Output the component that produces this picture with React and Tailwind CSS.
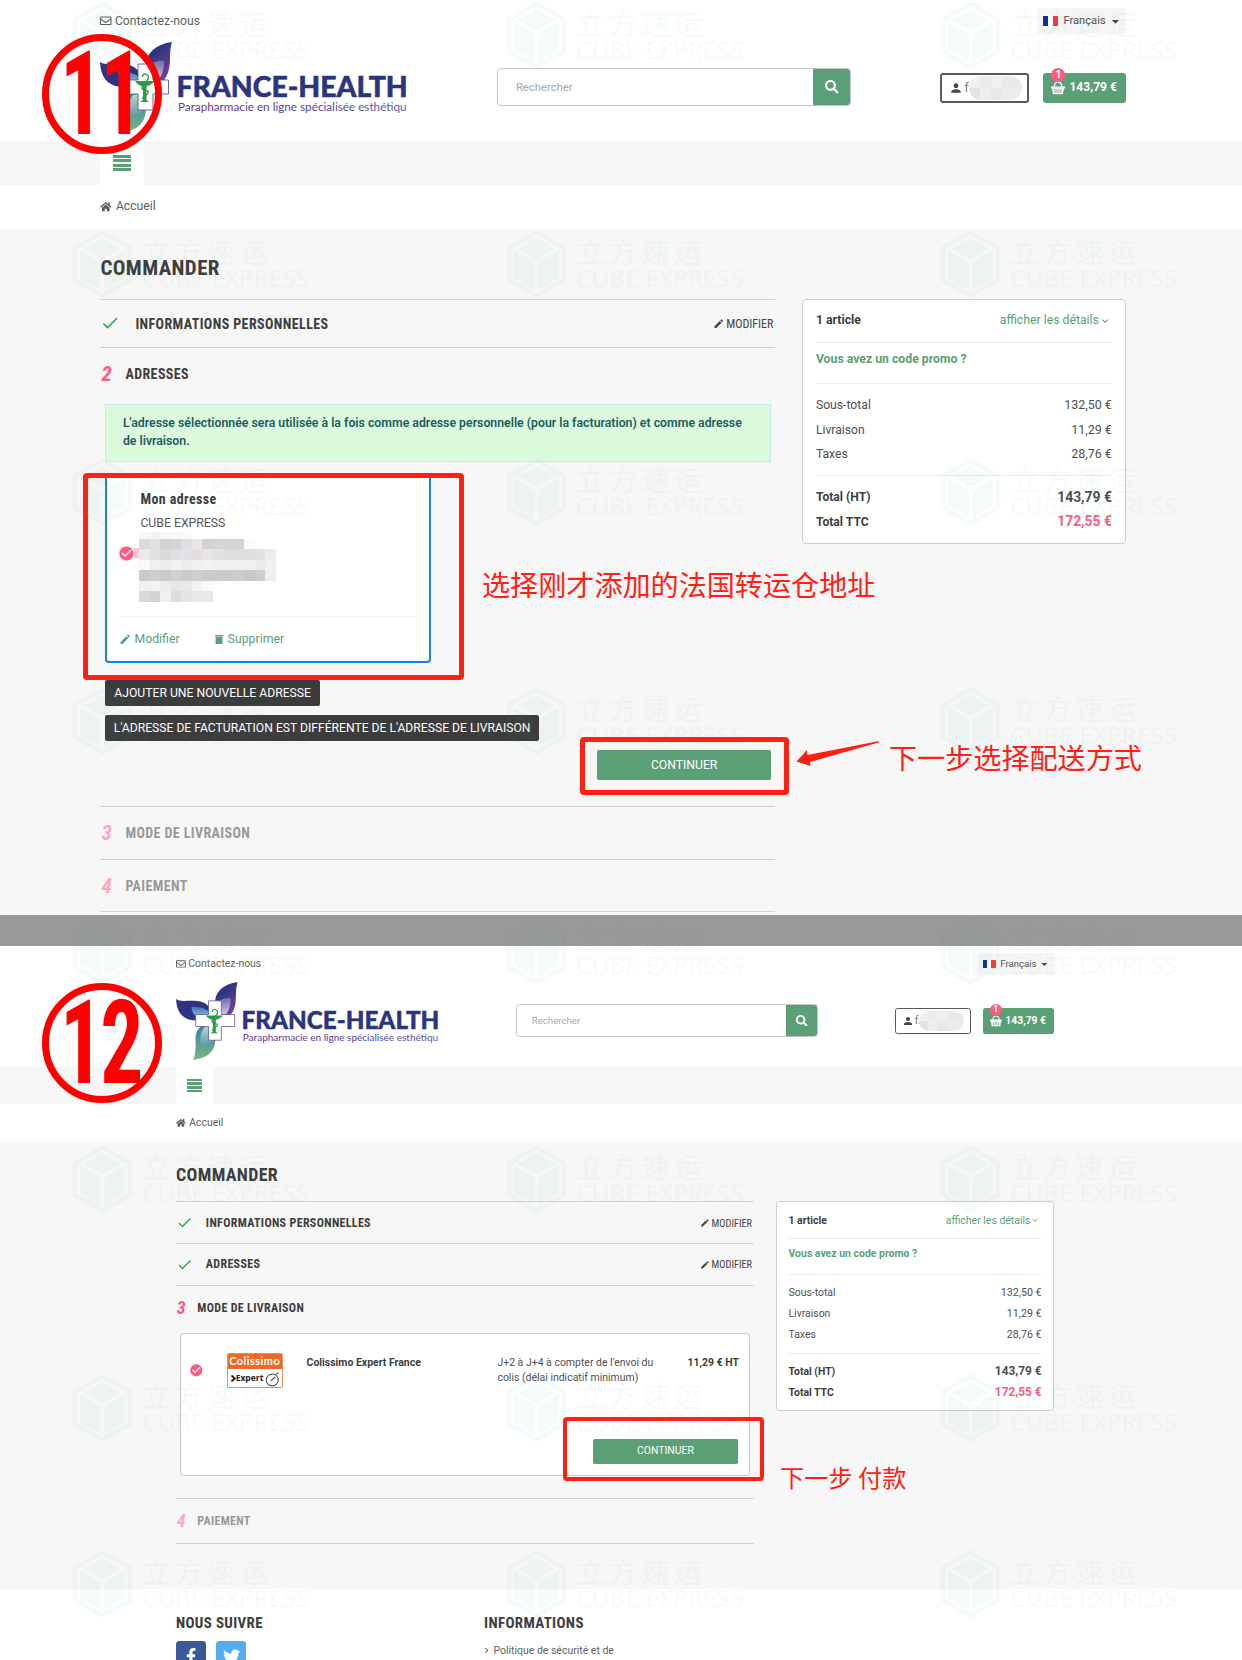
import React from "react";
import { FaRegEnvelope, FaHome, FaSearch, FaFacebookF, FaTwitter } from "react-icons/fa";
import { MdPerson, MdEdit, MdCheck, MdCheckCircle, MdKeyboardArrowDown, MdKeyboardArrowRight, MdArrowDropDown } from "react-icons/md";

function Logo({ id }) {
  return (
    <svg className="h-[92px] w-[312px] shrink-0 overflow-visible" viewBox="0 0 312 92">
      <defs>
        <linearGradient id={id + "a"} x1="0" y1="0" x2="0.6" y2="1">
          <stop offset="0.35" stopColor="#2e3480" />
          <stop offset="1" stopColor="#73438f" />
        </linearGradient>
        <linearGradient id={id + "b"} x1="0" y1="0" x2="0" y2="1">
          <stop offset="0" stopColor="#3583ab" />
          <stop offset="1" stopColor="#7bb486" />
        </linearGradient>
        <linearGradient id={id + "c"} x1="0" y1="0" x2="0" y2="1">
          <stop offset="0" stopColor="#6d6db0" />
          <stop offset="1" stopColor="#d9c6e0" />
        </linearGradient>
        <linearGradient id={id + "d"} x1="0" y1="0" x2="0" y2="1">
          <stop offset="0" stopColor="#4372b5" />
          <stop offset="1" stopColor="#8fbfe2" />
        </linearGradient>
        <linearGradient id={id + "e"} x1="0" y1="0" x2="0" y2="1">
          <stop offset="0" stopColor="#bcd9d6" />
          <stop offset="1" stopColor="#5d9fa0" />
        </linearGradient>
        <linearGradient id={id + "f"} x1="0" y1="0" x2="1" y2="0">
          <stop offset="0" stopColor="#6f3597" />
          <stop offset="0.5" stopColor="#4a43a0" />
          <stop offset="1" stopColor="#5d5bb0" />
        </linearGradient>
      </defs>
      <path d="M72 0C56 2 45 12 46 24L46 40H62C68 35 70 26 70 16C70 9 71 3 72 0Z" fill={`url(#${id}a)`} />
      <path d="M52 21C57 19 60 18 64 19C64 27 62 34 58 38H50Z" fill={`url(#${id}c)`} />
      <path d="M0 20C4 23 10 22 18 22C28 22 36 23 40 32V42L24 45C10 45 1 38 0 20Z" fill="#2e3480" />
      <path d="M18 29C26 29 34 30 40 36V41H24C20 38 18 33 18 29Z" fill={`url(#${id}d)`} />
      <path d="M32 50C24 54 22 62 23 72C23 80 22 87 20 91C36 89 46 82 46 66V50Z" fill={`url(#${id}b)`} />
      <path d="M33 53C29 58 28 65 29 74C36 74 42 71 44 66V50Z" fill={`url(#${id}e)`} />
      <path d="M38 22H53V38H68.5V52H53V68H38V52H23V38H38Z" fill="#fff" stroke="#5553a0" strokeWidth="0.9" strokeLinejoin="round" />
      <path d="M35 39H55C52 42 49 44 46.5 44V58L49 60H40L43 58V44C40 44 37 42 35 39Z" fill="#2b9c48" />
      <path d="M42.5 35C42 30 49 32 48.5 36C48 40 41 42 42 46C43 50 49 47 48 51C47 54 42 53 43 57" fill="none" stroke="#2b9c48" strokeWidth="1.4" />
      <text x="76.5" y="54.5" className="font-['Lato'] text-[28.35px] font-black" fill="#2c347f" stroke="#2c347f" strokeWidth="0.5">FRANCE-HEALTH</text>
      <text x="78" y="68.8" className="font-['Lato'] text-[11.72px]" fill={`url(#${id}f)`}>Parapharmacie en ligne spécialisée esthétiqu</text>
    </svg>
  );
}

function BasketIcon() {
  return (
    <svg className="h-[14px] w-[14px]" viewBox="0 0 14 14">
      <path d="M3.2 6C3.2 -0.5 10.8 -0.5 10.8 6" fill="none" stroke="#fff" strokeWidth="1.2" />
      <path d="M0 5.4H14V7.4H13L12 13.2H2L1 7.4H0Z" fill="#fff" />
      <path d="M4 8V12M6 8V12M8 8V12M10 8V12" stroke="#5b9f76" strokeWidth="0.8" />
    </svg>
  );
}

function FlagFr() {
  return (
    <span className="flex h-[10px] w-[15px]">
      <span className="flex-1 bg-[#10309a]" />
      <span className="flex-1 bg-white" />
      <span className="flex-1 bg-[#f23a45]" />
    </span>
  );
}

function Header({ id, pad, initial }) {
  return (
    <header className="bg-white">
      <div className={pad}>
        <div className="flex h-[41px] w-[1025.5px] items-center justify-between pt-px">
          <div className="flex items-center gap-[3px] text-[#5f5f5f]">
            <FaRegEnvelope className="size-[11.5px]" />
            <span className="text-[12.2px]">Contactez-nous</span>
          </div>
          <div className="flex h-[26px] w-[89px] items-center bg-[#f6f6f6] pl-[6px]">
            <FlagFr />
            <span className="ml-[5.5px] text-[11.2px] text-[#555]">Français</span>
            <MdArrowDropDown className="ml-[1px] size-[17px] text-[#444]" />
          </div>
        </div>
        <div className="flex h-[100px] w-[1025.5px] items-start">
          <div className="flex w-[397px] shrink-0 pt-px">
            <Logo id={id} />
          </div>
          <div className="mt-[27px] flex h-[38px] w-[353.5px] shrink-0 overflow-hidden rounded-[4px] border border-[#c6c6c6]">
            <span className="flex flex-1 items-center pt-[2px] pl-[17.5px] text-[11.3px] text-[#a9a9a9]">Rechercher</span>
            <span className="-my-px -mr-px flex w-[38px] items-center justify-center bg-[#5b9f76]">
              <FaSearch className="size-[13.5px] text-white" />
            </span>
          </div>
          <div className="mt-[31.5px] ml-auto flex h-[30px] w-[89.5px] items-center rounded-[3px] border-2 border-[#5a5a5a] pl-[8px]">
            <MdPerson className="-ml-px size-[14px] text-[#444]" />
            <span className="ml-[1.5px] w-[3.5px] text-[12px] text-[#777]">{initial}</span>
            <span className="ml-[1px] flex h-[24px] w-[53px] flex-wrap overflow-hidden rounded-full">
              <span className="h-1/2 w-[11px] bg-[#f0f0f0]" />
              <span className="h-1/2 w-[11px] bg-[#ebebeb]" />
              <span className="h-1/2 w-[11px] bg-[#efefef]" />
              <span className="h-1/2 w-[20px] bg-[#e9e9e9]" />
              <span className="h-1/2 w-[11px] bg-[#e4e4e4]" />
              <span className="h-1/2 w-[11px] bg-[#eeeeee]" />
              <span className="h-1/2 w-[11px] bg-[#e8e8e8]" />
              <span className="h-1/2 w-[20px] bg-[#ececec]" />
            </span>
          </div>
          <div className="relative mt-[31.5px] ml-[13.5px] flex h-[30px] w-[83px] items-center rounded-[3px] bg-[#5b9f76] pl-[8.5px]">
            <BasketIcon />
            <span className="ml-[4px] text-[12.1px] font-bold whitespace-nowrap text-white">143,79 €</span>
            <span className="absolute top-[-5px] left-[8.5px] flex size-[14px] items-center justify-center rounded-full bg-[#ff5b80] text-[10.5px] font-bold text-white">1</span>
          </div>
        </div>
      </div>
      <div className={`h-[44px] bg-[#f7f7f7] ${pad}`}>
        <div className="flex h-full w-[43.5px] flex-col items-center bg-white pt-[14px]">
          <div className="flex w-[18px] flex-col gap-[1.6px]">
            <span className="h-[2.8px] bg-[#5b9f76]" />
            <span className="h-[2.8px] bg-[#5b9f76]" />
            <span className="h-[2.8px] bg-[#5b9f76]" />
            <span className="h-[2.8px] bg-[#5b9f76]" />
          </div>
        </div>
      </div>
      <div className={`flex h-[44px] items-center gap-[4px] pb-[1.5px] text-[#5f5f5f] ${pad}`}>
        <FaHome className="size-[11.5px]" />
        <span className="text-[12.2px]">Accueil</span>
      </div>
    </header>
  );
}

function DoneStep({ title }) {
  return (
    <div className="flex h-[48.8px] items-center border-t-[1.5px] border-[#d4d4d4] pt-px">
      <MdCheck className="-mt-px size-[20px] text-[#2ba84a]" />
      <span className="mt-px ml-[15px] font-['Roboto_Condensed'] text-[14px] font-bold tracking-[0.4px] text-[#3d3d3d]">{title}</span>
      <span className="mr-[2px] ml-auto flex items-center gap-[2px] font-['Roboto_Condensed'] text-[12px] text-[#444]">
        <MdEdit className="size-[11.5px]" />
        MODIFIER
      </span>
    </div>
  );
}

function Step({ n, title, muted }) {
  return (
    <div className="border-t-[1.5px] border-[#d0d0d0]">
      <div className={`flex h-[51.5px] items-center pt-[1.5px] font-['Roboto_Condensed'] font-bold ${muted ? "opacity-50" : ""}`}>
        <span className="w-[25px] pl-[1px] text-[21px] text-[#ff5b80] italic">{n}</span>
        <span className="text-[14px] tracking-[0.4px] text-[#3d3d3d]">{title}</span>
      </div>
    </div>
  );
}

function SummaryRow({ label, value }) {
  return (
    <div className="flex h-[24.6px] items-center justify-between text-[#505050]">
      <span className="text-[12.2px]">{label}</span>
      <span className="text-[12.5px]">{value}</span>
    </div>
  );
}

function Summary() {
  return (
    <aside className="mt-[69.5px] ml-[26.5px] h-[245px] w-[324px] shrink-0 rounded-[4px] border border-[#cdcdcd] bg-white px-[13px]">
      <div className="flex h-[43px] items-center justify-between border-b-[1.5px] border-[#ededed] text-[12.25px]">
        <span className="font-bold text-[#3d3d3d]">1 article</span>
        <span className="mr-[1px] flex items-center text-[#5b9f76]">
          afficher les détails
          <MdKeyboardArrowDown className="size-[12px]" />
        </span>
      </div>
      <div className="h-[41.5px] border-b-[1.5px] border-[#ededed] pt-[7.6px] text-[12.25px] font-bold text-[#5b9f76]">
        Vous avez un code promo ?
      </div>
      <div className="h-[92px] border-b-[1.5px] border-[#ededed] pt-[9px]">
        <SummaryRow label="Sous-total" value="132,50 €" />
        <SummaryRow label="Livraison" value="11,29 €" />
        <SummaryRow label="Taxes" value="28,76 €" />
      </div>
      <div className="pt-[9px] font-bold text-[#3d3d3d]">
        <div className="flex h-[24.6px] items-center justify-between">
          <span className="text-[12.15px]">Total (HT)</span>
          <span className="text-[13.9px] text-[#505050]">143,79 €</span>
        </div>
        <div className="flex h-[24.6px] items-center justify-between">
          <span className="text-[12.15px]">Total TTC</span>
          <span className="text-[13.9px] text-[#ff5b80]">172,55 €</span>
        </div>
      </div>
    </aside>
  );
}

function PageTitle() {
  return (
    <h1 className="flex h-[69.5px] items-center pt-[9.5px] font-['Roboto_Condensed'] text-[21px] font-bold tracking-[0.4px] text-[#3d3d3d]">
      COMMANDER
    </h1>
  );
}

const mosaic = [
  ["#f7f7f7", "#f4f4f4", "#f7f7f7", "#f8f8f8", "#fafafa"],
  ["#dcdadb", "#e2e2e2", "#d2d0d0", "#d5d4d4", "#dcdfe6", "#e6e6e6", "#d3d1ce", "#d6d4d1", "#d6d4d1", "#d5d4d0", "#f9fbfe"],
  ["#ebe9e9", "#e0e1e4", "#dadada", "#e0dfe0", "#e4e0e3", "#e4dde0", "#e6e6e6", "#e1e2e2", "#dedede", "#dfdddd", "#dedede", "#e2e2e2", "#ececee"],
  ["#fafafa", "#f0f0f2", "#ededef", "#f2f0f0", "#efebeb", "#f0f0f0", "#f4f2f2", "#efefef", "#f0efef", "#eeeeee", "#f0eeee", "#ebebeb", "#f0f0f4"],
  ["#cbc9c9", "#d0cdcd", "#cdc9c9", "#d4d0d0", "#c8cbd2", "#d0d0d0", "#cbcbcd", "#cfcaca", "#cdc9ca", "#cfcccf", "#c8c8c8", "#d0cccc", "#eeeef4"],
  ["#f0f2f0", "#f2f2f2", "#ececea", "#e6e6e6", "#e9e9e9", "#f3f3f5", "#fbfbfb"],
  ["#dad8da", "#d6d3d5", "#efefed", "#dcdcdc", "#e3e3e1", "#e8e8e6", "#e8e8e8"],
];

function AddressCard() {
  return (
    <div className="mt-[13.5px] ml-[4.5px] h-[188px] w-[326px] rounded-[4px] border-2 border-[#1c80d4] bg-white px-[12.5px]">
      <div className="flex h-[139.5px] border-b-[1.5px] border-[#f1f1f1]">
        <div className="w-[21px] pt-[67.5px]">
          <div className="flex items-center">
            <MdCheckCircle className="-ml-[1.5px] size-[17px] shrink-0 text-[#ff5b80]" />
            <span className="-ml-px h-[10px] w-[7px] shrink-0 bg-[#ffc5d2]" />
          </div>
        </div>
        <div className="pt-[12.5px]">
          <div className="font-['Roboto_Condensed'] text-[14px] leading-[19px] font-bold tracking-[0.4px] text-[#3d3d3d]">Mon adresse</div>
          <div className="mt-[5px] text-[12.25px] leading-[18px] text-[#555]">CUBE EXPRESS</div>
          <div className="-ml-px">
            {mosaic.map((row, i) => (
              <div key={i} className={i === 0 ? "flex h-[7px]" : "flex h-[10.5px]"}>
                {row.map((c, j) => (
                  <span key={j} className="h-full w-[10.5px]" style={{ backgroundColor: c }} />
                ))}
              </div>
            ))}
          </div>
        </div>
      </div>
      <div className="flex h-[45px] items-center text-[12.3px] text-[#5b9f76]">
        <MdEdit className="size-[12.5px]" />
        <span className="ml-[2.5px]">Modifier</span>
        <svg className="ml-[35px] h-[9px] w-[8px]" viewBox="0 0 8 9">
          <path d="M0 0H8V1.2H0ZM0.6 1.8H7.4V9H0.6Z" fill="#5b9f76" />
        </svg>
        <span className="ml-[5px]">Supprimer</span>
      </div>
    </div>
  );
}

function ContinueButton({ className }) {
  return (
    <button className={`flex h-[29.5px] items-center justify-center rounded-[2px] bg-[#5b9f76] text-[12.2px] text-white ${className}`}>CONTINUER</button>
  );
}

function AddressPanel() {
  return (
    <section className="h-[915px] overflow-hidden bg-[#f7f7f7]">
      <Header id="p1" pad="pl-[100.4px]" initial="f" />
      <main className="flex pl-[100.4px]">
        <div className="w-[675px] shrink-0">
          <PageTitle />
          <DoneStep title="INFORMATIONS PERSONNELLES" />
          <Step n="2" title="ADRESSES" />
          <div className="mx-[4.5px] mt-[4px] h-[58px] border border-[#c6ece4] bg-[#dcfbdd] px-[17px] pt-[10.5px] text-[12.3px] leading-[17.5px] font-semibold whitespace-nowrap text-[#1d5c5f]">
            L'adresse sélectionnée sera utilisée à la fois comme adresse personnelle (pour la facturation) et comme adresse
            <br />
            de livraison.
          </div>
          <AddressCard />
          <div className="mt-[16.5px] ml-[4.5px] flex flex-col items-start gap-[8.5px] text-[12.2px] text-white">
            <button className="h-[26.5px] w-[215.5px] rounded-[2px] bg-[#3c3c3c] whitespace-nowrap">AJOUTER UNE NOUVELLE ADRESSE</button>
            <button className="h-[26.5px] w-[434.5px] rounded-[2px] bg-[#3c3c3c] text-[12.15px] whitespace-nowrap">
              L'ADRESSE DE FACTURATION EST DIFFÉRENTE DE L'ADRESSE DE LIVRAISON
            </button>
          </div>
          <ContinueButton className="mt-[9px] mr-[4.5px] ml-auto w-[173.5px]" />
          <div className="mt-[26.5px]">
            <Step n="3" title="MODE DE LIVRAISON" muted />
            <Step n="4" title="PAIEMENT" muted />
            <div className="border-t-[1.5px] border-[#d4d4d4]" />
          </div>
        </div>
        <Summary />
      </main>
    </section>
  );
}

function ColissimoLogo() {
  return (
    <div className="h-[41px] w-[65px] overflow-hidden rounded-[2px] border border-[#ec8f55] bg-white">
      <div className="-mx-px -mt-px flex h-[18px] items-center justify-center bg-[#ec6a23] font-['Lato'] text-[12.8px] font-bold tracking-[0.55px] text-white">Colissimo</div>
      <div className="flex h-[23px] items-center pl-[3px]">
        <svg className="h-[8px] w-[6px]" viewBox="0 0 6 8">
          <path d="M0.5 0.5L4.5 4L0.5 7.5" fill="none" stroke="#222" strokeWidth="2.2" />
        </svg>
        <span className="w-[34px] font-['Open_Sans'] text-[10px] font-bold text-[#222]">Expert</span>
        <svg className="h-[19px] w-[18px]" viewBox="0 0 18 19">
          <circle cx="8.5" cy="10.5" r="7" fill="none" stroke="#444" strokeWidth="1.2" />
          <path d="M6.5 11.5L12 7M13 4L15.5 2" fill="none" stroke="#444" strokeWidth="1.3" />
        </svg>
      </div>
    </div>
  );
}

function DeliveryPanel() {
  return (
    <section className="h-[836px] w-[1451px] bg-white [zoom:0.856]">
      <Header id="p2" pad="pl-[205.5px]" initial="f." />
      <main className="flex h-[521.7px] bg-[#f7f7f7] pl-[205.5px]">
        <div className="w-[675px] shrink-0">
          <PageTitle />
          <DoneStep title="INFORMATIONS PERSONNELLES" />
          <DoneStep title="ADRESSES" />
          <Step n="3" title="MODE DE LIVRAISON" />
          <div className="mt-[3.5px] ml-[4.5px] flex h-[166.5px] w-[666px] flex-col rounded-[4px] border border-[#c9c9c9] bg-white pr-[11.5px] pl-[10px] text-[12.25px] text-[#505050]">
            <div className="flex pt-[22.5px]">
              <MdCheckCircle className="mt-[11px] size-[17px] shrink-0 text-[#ff5b80]" />
              <div className="ml-[27px] w-[93px] shrink-0">
                <ColissimoLogo />
              </div>
              <span className="w-[223px] shrink-0 pt-[3px] leading-[17.5px] font-bold text-[#3d3d3d]">Colissimo Expert France</span>
              <p className="pt-[3px] leading-[17.5px] whitespace-nowrap">
                J+2 à J+4 à compter de l'envoi du
                <br />
                colis (délai indicatif minimum)
              </p>
              <span className="ml-auto pt-[3px] leading-[17.5px] font-bold text-[#3d3d3d]">11,29 € HT</span>
            </div>
            <ContinueButton className="mt-auto mr-[1px] mb-[12.5px] ml-auto w-[170px]" />
          </div>
          <div className="mt-[26px]">
            <Step n="4" title="PAIEMENT" muted />
            <div className="border-t-[1.5px] border-[#d0d0d0]" />
          </div>
        </div>
        <Summary />
      </main>
      <footer className="flex pt-[30px] pl-[205.5px]">
        <div className="w-[360px]">
          <h2 className="font-['Roboto_Condensed'] text-[17.5px] leading-[22px] font-bold tracking-[0.4px] text-[#3d3d3d]">NOUS SUIVRE</h2>
          <div className="mt-[9.5px] flex gap-[12px]">
            <span className="flex size-[35px] items-center justify-center rounded-[4px] bg-[#3b5998]">
              <FaFacebookF className="size-[19px] text-white" />
            </span>
            <span className="flex size-[35px] items-center justify-center rounded-[4px] bg-[#55acee]">
              <FaTwitter className="size-[20px] text-white" />
            </span>
          </div>
        </div>
        <div>
          <h2 className="font-['Roboto_Condensed'] text-[17.5px] leading-[22px] font-bold tracking-[0.4px] text-[#3d3d3d]">INFORMATIONS</h2>
          <div className="mt-[11.5px] flex items-center text-[12.25px] leading-[18px] text-[#5f5f5f]">
            <MdKeyboardArrowRight className="-ml-[4px] size-[13px]" />
            <span className="ml-[2px]">Politique de sécurité et de</span>
          </div>
        </div>
      </footer>
    </section>
  );
}

const marks = [35.5, 264, 492, 721, 951, 1179, 1408, 1584].flatMap((y) => [102.5, 536.5, 970.5].map((x) => [x, y]));

function Watermarks() {
  return (
    <svg className="pointer-events-none absolute inset-0 h-[1660px] w-[1242px]" viewBox="0 0 1242 1660" opacity="0.042" fill="#32aa82">
      {marks.map(([x, y]) => (
        <g key={`${x}-${y}`} transform={`translate(${x} ${y})`}>
          <path d="M0 -31.5L27.5 -16V16L0 31.5L-27.5 16V-16Z" fill="none" stroke="#32aa82" strokeWidth="4.5" />
          <path d="M0 -26L18.5 -15.5L0 -4.8L-18.5 -15.5Z" />
          <path d="M-22.5 -13.5L-6 -4L-1.8 0.5V26L-22.5 13.5Z" />
          <path d="M22.5 -13.5L5 -3.5L1.8 0.5V26L22.5 13.5Z" />
          <text x="40" y="-1" className="font-['Noto_Sans_CJK_SC'] text-[28.5px] font-normal tracking-[3.8px]">立方速运</text>
          <text x="39.5" y="23" className="font-['Open_Sans'] text-[24px] tracking-[0.3px]">CUBE EXPRESS</text>
        </g>
      ))}
    </svg>
  );
}

function StepNumber({ a, b, className }) {
  return (
    <div className={`absolute left-[42px] flex size-[120px] items-center justify-center rounded-full border-[7px] border-[#ff0000] text-[#ff0000] ${className}`}>
      <span className="mr-[4px] flex scale-x-[0.73] font-['Roboto_Condensed'] text-[117px] leading-none font-bold tracking-[-4px]">
        <span>{a}</span>
        <span>{b}</span>
      </span>
    </div>
  );
}

export default function App() {
  return (
    <div className="relative h-[1660px] w-[1242px] overflow-hidden bg-white font-['Roboto',sans-serif]">
      <AddressPanel />
      <div className="h-[31px] bg-[#999999]" />
      <DeliveryPanel />

      <StepNumber a="1" b="1" className="top-[34px]" />
      <StepNumber a="1" b="2" className="top-[983px]" />

      <div className="absolute top-[472.5px] left-[82.5px] h-[207px] w-[381.5px] rounded-[4px] border-[5px] border-[#ff2014]" />
      <div className="absolute top-[737px] left-[579.5px] h-[57.5px] w-[209.5px] rounded-[4px] border-[5px] border-[#ff2014]" />
      <div className="absolute top-[1417px] left-[563px] h-[64px] w-[200.5px] rounded-[4px] border-[4.5px] border-[#ff2014]" />
      <svg className="absolute top-[740px] left-[795px] h-[28px] w-[86px]" viewBox="0 0 86 28" fill="#ff2014">
        <path d="M1.5 21.5L12 10L12.5 15L83 1.2C84.5 1 84.5 2.2 83.5 2.6L15 22L15.5 26Z" />
      </svg>
      <div className="absolute top-[564px] left-[482px] font-['Noto_Sans_CJK_SC',sans-serif] text-[28.1px] leading-[40px] whitespace-nowrap text-[#ff2014]">选择刚才添加的法国转运仓地址</div>
      <div className="absolute top-[737px] left-[889px] font-['Noto_Sans_CJK_SC',sans-serif] text-[28.1px] leading-[40px] whitespace-nowrap text-[#ff2014]">下一步选择配送方式</div>
      <div className="absolute top-[1457px] left-[780px] font-['Noto_Sans_CJK_SC',sans-serif] text-[24.2px] leading-[40px] whitespace-nowrap text-[#ff2014]">下一步 付款</div>
      <Watermarks />
    </div>
  );
}
